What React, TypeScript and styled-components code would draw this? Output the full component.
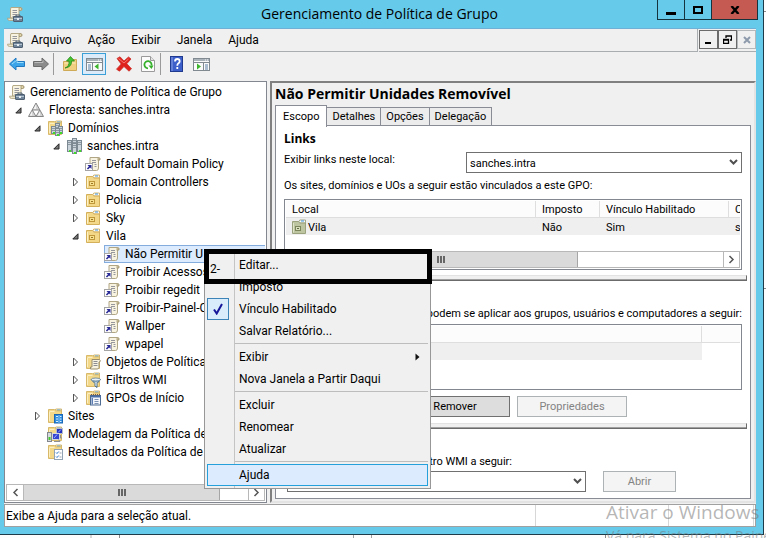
import React from "react";
import styled, { createGlobalStyle, css } from "styled-components";

const UI = '"Open Sans", "Noto Sans", sans-serif';
const LABEL = 'Roboto, "Open Sans", sans-serif';
const CLASSIC = 'Roboto, "Liberation Sans", Arial, sans-serif';

const GlobalStyle = createGlobalStyle`
  *, *::before, *::after { box-sizing: border-box; }
  body { margin: 0; background: #fdfdfd; font: 12px/18px ${LABEL}; color: #000; }
  button, select { font: inherit; color: inherit; border-radius: 0; margin: 0; }
  ul { list-style: none; margin: 0; padding: 0; }
  h1, h2, p { margin: 0; font: inherit; }
  svg { display: block; flex: none; }
`;

/* ---------- window frame ---------- */

const Desktop = styled.div`
  position: relative;
  min-height: 100vh;
  overflow: hidden;
  padding: 0 2px 3px 0;
  display: flex;
  background:
    linear-gradient(#8a8a8a, #8a8a8a) 119px 100% / 1px 3px no-repeat,
    linear-gradient(#d8d8d8, #d8d8d8) 90px 100% / 2px 3px no-repeat,
    linear-gradient(#a0a0a0, #a0a0a0) 353px 100% / 1px 3px no-repeat,
    linear-gradient(#a0a0a0, #a0a0a0) 371px 100% / 1px 3px no-repeat,
    linear-gradient(#8a8a8a, #8a8a8a) 605px 100% / 1px 3px no-repeat,
    linear-gradient(#8a8a8a, #8a8a8a) 100% 11px / 2px 1px no-repeat,
    linear-gradient(#8a8a8a, #8a8a8a) 100% 288px / 2px 1px no-repeat,
    #fdfdfd;
`;

const Window = styled.div`
  flex: 1;
  min-width: 0;
  display: flex;
  flex-direction: column;
  background: #66caea;
  border: solid #1d3b48;
  border-width: 0 1px 1px 0;
  padding: 0 7px 7px 4px;
`;

const TitleBar = styled.header`
  height: 28px;
  display: grid;
  grid-template-columns: 95px 1fr 101px;
  align-items: center;
  padding-left: 3px;
  margin-right: -2px;
`;

const Title = styled.h1`
  font-family: ${UI};
  font-size: 14px;
  text-align: center;
`;

const CaptionButtons = styled.div`
  display: flex;
  align-self: start;
  border: solid #14333f;
  border-width: 0 1px 1px 1px;
  height: 20px;
`;

const CaptionButton = styled.button<{ $close?: boolean }>`
  display: grid;
  place-items: center;
  flex: ${(p) => (p.$close ? "46" : "27")};
  padding: 0;
  border: 0;
  background: ${(p) => (p.$close ? "#c45a52" : "transparent")};
  & + & { border-left: 1px solid #14333f; }
`;

const Client = styled.div`
  flex: 1;
  display: flex;
  flex-direction: column;
  background: #f0f0f0;
  border-top: 1px solid #6fb0d6;
`;

const MenuBar = styled.nav`
  height: 24px;
  display: flex;
  align-items: stretch;
`;

const MenuBarItems = styled.div`
  flex: 1;
  display: flex;
  align-items: center;
  padding: 0 3px;
  border: solid #a9adb0;
  border-width: 0 1px 1px 0;
  margin-bottom: 1px;
`;

const MenuBarButton = styled.button`
  border: 0;
  background: none;
  padding: 0 8px;
`;

const MdiButtons = styled.div`
  display: flex;
  padding: 1px 0 0;
  margin: 0 0 1px 1px;
  border-bottom: 1px solid #a9adb0;
`;

const MdiButton = styled.button`
  width: 19px;
  height: 19px;
  padding: 0;
  display: grid;
  place-items: center;
  background: #f0f0f0;
  border: 1px solid #6b6b6b;
  &:disabled { border-color: #b4b8ba; }
`;

const ToolBar = styled.div`
  height: 28px;
  display: flex;
  align-items: flex-start;
  padding-left: 1px;
`;

const ToolButton = styled.button<{ $pressed?: boolean }>`
  width: 24px;
  height: 22px;
  padding: 0;
  display: grid;
  place-items: center;
  border: 1px solid ${(p) => (p.$pressed ? "#3a9fd6" : "transparent")};
  background: ${(p) => (p.$pressed ? "#dcebfa" : "none")};
  ${(p) => p.$pressed && "margin-right: 6px;"}
`;

const ToolSeparator = styled.span`
  width: 1px;
  height: 22px;
  background: #9a9a9a;
  margin: 0 4px 0 0;
`;

const Main = styled.main`
  flex: 1;
  display: flex;
  gap: 3px;
  margin-bottom: 1px;
`;

/* ---------- tree pane ---------- */

const TreePane = styled.section`
  width: 263px;
  flex: none;
  display: flex;
  flex-direction: column;
  background: #fff;
  border: 1px solid #828790;
  padding: 1px;
`;

const TreeRoot = styled.ul`
  flex: 1;
  padding-left: 3px;
`;

const TreeGroup = styled.ul<{ $root?: boolean }>`
  padding-left: ${(p) => (p.$root ? 0 : 19)}px;
`;

const TreeRow = styled.div`
  display: flex;
  align-items: center;
  height: 18px;
`;

const Twisty = styled.span`
  width: 19px;
  flex: none;
  padding-left: 6px;
`;

const TreeLabel = styled.span<{ $selected?: boolean }>`
  flex: 1;
  min-width: 0;
  display: flex;
  align-items: center;
  gap: 5px;
  height: 18px;
  overflow: hidden;
  white-space: nowrap;
  ${(p) =>
    p.$selected &&
    css`
      background: #dcebfd;
      box-shadow: inset 0 1px #84acdd, inset 0 -1px #84acdd, inset 1px 0 #84acdd;
    `}
`;

/* ---------- scroll bars ---------- */

const ScrollTrack = styled.div`
  height: 17px;
  display: grid;
  border: 1px solid #b8b8b8;
  background: #fff;
`;
const TreeTrack = styled(ScrollTrack)`
  grid-template-columns: 17px 196px 1fr 16px;
`;
const ListTrack = styled(ScrollTrack)`
  grid-template-columns: 17px 274px 1fr 16px;
`;

const ScrollButton = styled.button<{ $end?: boolean }>`
  display: grid;
  place-items: center;
  padding: 0;
  border: solid #b8b8b8;
  border-width: ${(p) => (p.$end ? "0 0 0 1px" : "0 1px 0 0")};
  background: #fff;
`;

const Thumb = styled.div`
  display: grid;
  place-items: center;
  background: #dadada;
  border-right: 1px solid #a6a6a6;
`;

/* ---------- details pane ---------- */

const DetailPane = styled.section`
  flex: 1;
  min-width: 0;
  display: flex;
  flex-direction: column;
  font: 11px/15px ${CLASSIC};
  border: 2px solid;
  border-color: #808080 #e3e3e3 #e3e3e3 #808080;
  padding: 0 3px 2px 3px;
`;

const PaneTitle = styled.h2`
  font-family: ${UI};
  font-size: 14px;
  font-weight: bold;
  line-height: 22px;
  height: 22px;
`;

const Tabs = styled.div`
  display: flex;
  align-items: flex-end;
  height: 20px;
`;

const Tab = styled.button<{ $active?: boolean }>`
  height: ${(p) => (p.$active ? 22 : 18)}px;
  padding: 0 ${(p) => (p.$active ? 7 : 5)}px;
  border: 1px solid #898c95;
  border-bottom: 0;
  background: ${(p) => (p.$active ? "#fff" : "#ececec")};
  ${(p) => p.$active && "position: relative; margin-bottom: -2px;"}
  & + & { margin-left: -1px; }
  &:nth-child(2) { margin-left: 0; border-left: 0; }
`;

const TabPage = styled.div`
  flex: 1;
  background: #fff;
  border: 1px solid #898c95;
  padding: 5px 8px 6px;
`;

const SectionTitle = styled.h2`
  font-family: ${UI};
  font-size: 12px;
  font-weight: bold;
  line-height: 16px;
`;

const LocationRow = styled.div`
  display: grid;
  grid-template-columns: 182px 1fr;
  align-items: start;
  margin-top: 5px;
`;

const SelectBox = styled.div`
  position: relative;
  select {
    display: block;
    appearance: none;
    width: 100%;
    height: 21px;
    padding: 2px 3px 0;
    background: #fff;
    border: 1px solid #707070;
  }
  svg { position: absolute; right: 4px; top: 7px; pointer-events: none; }
`;

const Caption = styled.p`
  line-height: 15px;
  white-space: nowrap;
`;
const LinksCaption = styled(Caption)`
  margin: 5px 0 6px;
`;
const FilterCaption = styled(Caption)`
  margin: 25px 0 3px;
  display: flex;
  justify-content: flex-end;
`;
const WmiCaption = styled(Caption)`
  margin: 25px 0 2px;
  width: 228px;
  display: flex;
  justify-content: flex-end;
`;

const ListFrame = styled.div<{ $height: number }>`
  height: ${(p) => p.$height}px;
  display: flex;
  flex-direction: column;
  justify-content: space-between;
  border: 1px solid #828790;
  padding: 1px;
  overflow: hidden;
`;

const Table = styled.table`
  width: 100%;
  table-layout: fixed;
  border-collapse: separate;
  border-spacing: 0;
  line-height: 15px;
  th, td {
    height: 17px;
    padding: 1px 0 0 6px;
    text-align: left;
    font-weight: normal;
    white-space: nowrap;
    overflow: hidden;
  }
  th {
    background: #fcfcfc;
    border: solid #dedede;
    border-width: 0 1px 1px 0;
  }
  td { background: #efefef; }
  td + td:last-child:empty { background: #fff; }
  th:last-child { border-right: 0; }
`;

const CellWithIcon = styled.span`
  display: flex;
  align-items: center;
  gap: 1px;
  height: 16px;
  margin-left: -1px;
`;

const Divider = styled.hr`
  height: 6px;
  margin: 5px -5px 0 0;
  border: solid #6b6b6b;
  border-width: 1px 1px 1px 0;
  border-top-color: #e3e3e3;
  background: linear-gradient(#f0f0f0 3px, #a0a0a0 3px);
`;

const ButtonRow = styled.div`
  display: grid;
  grid-template-columns: 109px 110px 110px;
  column-gap: 7px;
  margin: 6px 0;
`;

const PushButton = styled.button<{ $column?: number }>`
  height: 21px;
  padding: 0;
  ${(p) => p.$column && `grid-column: ${p.$column};`}
  background: #dddddd;
  border: 1px solid #707070;
  &:disabled {
    color: #838383;
    background: #f4f4f4;
    border-color: #adb2b5;
  }
`;

const WmiRow = styled.div`
  display: grid;
  grid-template-columns: 299px 73px;
  gap: 17px;
  padding-left: 3px;
`;

/* ---------- status bar ---------- */

const StatusBar = styled.footer`
  height: 23px;
  display: grid;
  grid-template-columns: 1fr 133px 85px 2px;
  background: #fff;
  border: solid #a0a0a0;
  border-width: 1px 0 1px 1px;
  line-height: 23px;
  span { height: 21px; padding-left: 1px; border-right: 1px solid #d7d7d7; }
  span:last-child { border-right-color: #a0a0a0; }
`;

/* ---------- overlays ---------- */

const ContextMenu = styled.div`
  position: absolute;
  left: 204px;
  top: 251px;
  width: 227px;
  padding: 2px;
  background: linear-gradient(90deg, transparent 29px, #c4c4c4 29px, #c4c4c4 30px, transparent 30px) #f0f0f0;
  border: 1px solid #979797;
`;

const MenuItem = styled.button<{ $hot?: boolean }>`
  width: 100%;
  height: 22px;
  padding: 0 8px 0 0;
  display: grid;
  grid-template-columns: 22px 1fr auto;
  column-gap: 10px;
  align-items: center;
  text-align: left;
  background: ${(p) => (p.$hot ? "#dcebfd" : "none")};
  border: 0;
  box-shadow: ${(p) => (p.$hot ? "inset 0 0 0 1px #26a0da" : "none")};
`;

const MenuCheck = styled.span<{ $on?: boolean }>`
  width: 22px;
  height: 22px;
  display: grid;
  place-items: center;
  ${(p) => p.$on && "background: #d8ecfb; border: 1px solid #3c84b8;"}
`;

const MenuSeparator = styled.hr`
  height: 1px;
  margin: 1px 0 2px 28px;
  border: 0;
  background: #bdbdbd;
`;

const StepMarker = styled.div`
  position: absolute;
  left: 204px;
  top: 249px;
  width: 228px;
  height: 35px;
  border: 5px solid #000;
  padding: 6px 1px;
  pointer-events: none;
`;

const Watermark = styled.div`
  position: absolute;
  left: 606px;
  top: 499px;
  color: rgba(120, 120, 120, 0.55);
  font-family: ${UI};
  white-space: nowrap;
  pointer-events: none;
  p:first-child { font-size: 19px; line-height: 27px; }
  p:last-child { font-size: 14px; line-height: 20px; }
`;

/* ---------- icons ---------- */

const ScrollPaper = () => (
  <>
    <path d="M4 1.500h9.500q1.600 0 1.600 1.600t-1.600 1.400H12V12H3.500V3z" fill="#f8f3e0" stroke="#b5aa88" />
    <path d="M12 4.500V2.600q0-1.100 1.100-1.100t1.500 1.200-1 1.800z" fill="#e2d6ac" stroke="#9b8f69" strokeWidth=".8" />
    <path d="M5.500 4.500h4.500M5.500 6.500h4.500M5.500 8.500h4M5.500 10.500h3" stroke="#95979c" />
  </>
);

const ConsoleIcon = () => (
  <svg width="16" height="16" viewBox="0 0 16 16">
    <ScrollPaper />
    <path d="M.500 12.200h8v2.300H2.500Q.500 14.500.500 12.200z" fill="#efe7cb" stroke="#aa9f7c" strokeWidth=".8" />
    <rect x="6.500" y="10.500" width="9" height="5" rx=".5" fill="#71859a" stroke="#4d5f70" />
    <path d="M9 10.500V9h4v1.500" fill="none" stroke="#4d5f70" />
    <path d="M7 12.500h8" stroke="#b3c3cf" />
    <rect x="10" y="12" width="2" height="2" fill="#e9eef2" />
  </svg>
);

const GpoLinkIcon = () => (
  <svg width="16" height="16" viewBox="0 0 16 16">
    <path d="M5 1.500h8.500q1.700.2 1.500 1.700t-1.500 1.300V12q0 2.500-2 2.500H5z" fill="#f8f3e0" stroke="#b0a684" />
    <path d="M13 4.500V2.600q.2-1.100 1.100-.8t.8 1.500z" fill="#e2d6ac" stroke="#9b8f69" strokeWidth=".8" />
    <path d="M7 4.500h4M7 6.500h4M9.500 8.500h2M9.500 10.500h2" stroke="#95979c" />
    <rect x=".500" y="7.500" width="7" height="7" fill="#fff" stroke="#a4a4a4" />
    <path d="M2.500 9H6.500V13L5.100 11.600 3 13.600 1.900 12.500 3.900 10.400z" fill="#2a2a96" />
  </svg>
);

const FolderShape = () => (
  <>
    <path d="M8 2.500l.8-1.500h5.700v3" fill="#fdf5d8" stroke="#c9a64f" strokeWidth=".8" />
    <rect x="10" y="1.500" width="3.500" height="1.500" fill="#5aa5e8" />
    <path d="M1.500 1.500h6l1.200 1.300h5.800v11.700h-13z" fill="#f3d88a" stroke="#d8b96a" />
    <path d="M2.500 3.500h5M2.500 13V4" stroke="#fbeec0" />
  </>
);

const OuIcon = ({ green }: { green?: boolean }) => (
  <svg width="16" height="16" viewBox="0 0 16 16">
    <path d="M1.500 2.500h6l1.200 1.300h5.800v10.700h-13z" fill={green ? "#bdc4a0" : "#f3d88a"} stroke={green ? "#99a27c" : "#d4b05a"} />
    <path d="M8 2.500l.8-1.500h5.700v2.800H8.800z" fill="#fff" stroke={green ? "#8f9870" : "#c9a64f"} strokeWidth=".8" />
    <path d="M10 2h3" stroke="#3f93e0" />
    <path d="M2.500 4v9.500" stroke={green ? "#dfe4c8" : "#fcf0c6"} />
    <rect x="4.500" y="7.500" width="5" height="4" fill={green ? "#d8deba" : "#f7e08e"} stroke={green ? "#7a855c" : "#c0973a"} />
    <path d="M6 9.500h2" stroke={green ? "#5f6b45" : "#9a7422"} fill="none" />
  </svg>
);

const ForestIcon = () => (
  <svg width="16" height="16" viewBox="0 0 16 16">
    <path d="M8 1L15.500 14.500H.500z" fill="#d4d4d4" stroke="#868686" />
    <path d="M4.300 8h7.400L8 14.500z" fill="#fff" stroke="#868686" />
    <path d="M8 2.500L5.500 7H8zM4 9.500L1.800 13.600H4zM12 9.500L9.800 13.600H12z" fill="#f4f4f4" />
  </svg>
);

const Tower = ({ x, y, h }: { x: number; y: number; h: number }) => (
  <>
    <rect x={x + 0.5} y={y + 0.5} width="4" height={h} fill="#cbd4da" stroke="#7c8992" />
    <path d={`M${x + 1} ${y + 2.5}h3M${x + 1} ${y + 4.5}h3`} stroke="#8b98a1" />
    <rect x={x + 2} y={y + h - 1} width="2" height="2" fill="#3fdc2a" />
  </>
);

const DomainIcon = () => (
  <svg width="16" height="16" viewBox="0 0 16 16">
    <Tower x={6} y={0} h={9} />
    <Tower x={1} y={2} h={11} />
    <Tower x={11} y={2} h={11} />
    <Tower x={6} y={5} h={10} />
  </svg>
);

const DomainsIcon = () => (
  <svg width="16" height="16" viewBox="0 0 16 16">
    <FolderShape />
    <Tower x={8} y={3} h={6} />
    <Tower x={4} y={6} h={7} />
    <Tower x={11} y={6} h={7} />
    <Tower x={8} y={8} h={7} />
  </svg>
);

const ObjectsIcon = () => (
  <svg width="16" height="16" viewBox="0 0 16 16">
    <FolderShape />
    <path d="M7 5.500h7.500q1.300.8.300 2.500H14v5.500q-.5 1.500-1.800 1.500H5.500v-2H7z" fill="#f8f3e0" stroke="#988d6c" />
    <path d="M8.500 7.500h4M8.500 9.500h4M8.500 11.500h4" stroke="#8b8d92" />
  </svg>
);

const WmiIcon = () => (
  <svg width="16" height="16" viewBox="0 0 16 16">
    <FolderShape />
    <path d="M6 7.500h9.500L12 11.500v4L10 14v-2.500z" fill="#8fb1c9" stroke="#4b6c85" />
    <ellipse cx="10.800" cy="7.500" rx="4.600" ry="1.500" fill="#e7f0f6" stroke="#5b7b92" strokeWidth=".8" />
    <path d="M11 10v4" stroke="#dfeaf2" />
  </svg>
);

const StarterIcon = () => (
  <svg width="16" height="16" viewBox="0 0 16 16">
    <FolderShape />
    <rect x="5.500" y="5.500" width="10" height="9.500" fill="#f4f7fb" stroke="#4d6a91" />
    <path d="M6 6h10v1.500H6z" fill="#4a6fa8" />
    <path d="M6 4.500h10" stroke="#7d5a45" strokeDasharray="1 1" />
    <path d="M9.500 9.500h4M9.500 11.500h4M9.500 13.500h4" stroke="#7d93b5" />
    <path d="M6.500 8h1.500V14.500H6.500z" fill="#5b7db3" />
  </svg>
);

const SitesIcon = () => (
  <svg width="16" height="16" viewBox="0 0 16 16">
    <FolderShape />
    <rect x="7.500" y="6.500" width="8" height="8.500" fill="#2f8ee0" stroke="#1b66b5" />
    <path d="M9 8.500h2M13 8.500h1.500M9 11h2M13 11h1.500M9 13.500h2M13 13.500h1.500" stroke="#d9efff" />
    <path d="M12 7v8" stroke="#7ec0f5" />
  </svg>
);

const ModelIcon = () => (
  <svg width="16" height="16" viewBox="0 0 16 16">
    <FolderShape />
    <rect x="9.500" y="2.500" width="6" height="5" fill="#2330c0" stroke="#b8bcc4" />
    <rect x="5.500" y="7.500" width="7" height="6" fill="#3644d2" stroke="#d4d7dc" />
    <path d="M7 12l3-3.500M11 6.500l3-3" stroke="#9fb0ff" />
    <rect x=".500" y="6.500" width="4" height="9" fill="#d8dbe0" stroke="#83888f" />
    <rect x="1.500" y="11" width="2" height="3" fill="#43c92d" />
    <path d="M7 15.500h6l-1.500-2" fill="none" stroke="#8c9096" />
    <path d="M13.500 9v3h1.500" fill="none" stroke="#8c9096" />
  </svg>
);

const ResultsIcon = () => (
  <svg width="16" height="16" viewBox="0 0 16 16">
    <FolderShape />
    <rect x="7.500" y="5.500" width="8" height="10" fill="#fff" stroke="#93a3b4" />
    <path d="M9 8.500l1 1 1.800-2M9 12.500l1 1 1.800-2" fill="none" stroke="#2b77c4" />
    <path d="M12.500 9h2M12.500 13h2" stroke="#9aa4ae" />
  </svg>
);

const Expanded = () => (
  <svg width="7" height="7" viewBox="0 0 7 7">
    <path d="M6 .800V6H.800z" fill="#777" stroke="#262626" />
  </svg>
);
const Collapsed = () => (
  <svg width="7" height="10" viewBox="0 0 7 10">
    <path d="M1.500 1L5.500 5l-4 4z" fill="#fff" stroke="#555" />
  </svg>
);

const ArrowIcon = ({ forward }: { forward?: boolean }) => (
  <svg width="18" height="16" viewBox="0 0 18 16">
    <path
      d={forward ? "M16.500 8L10 2v3.500H1.500v5H10V14z" : "M1.500 8L8 2v3.500h8.500v5H8V14z"}
      fill={forward ? "#8c8c8c" : "#3ba3e8"}
      stroke={forward ? "#6b6b6b" : "#1f78c0"}
    />
    <path d={forward ? "M2.500 6.500h8.500V4.500" : "M15.500 6.500H9V4L4 8"} fill="none" stroke={forward ? "#bcbcbc" : "#9adcf9"} />
  </svg>
);

const UpFolderIcon = () => (
  <svg width="16" height="16" viewBox="0 0 16 16">
    <path d="M1.500 5.500h7l1-2h5v11h-13z" fill="#f0cf80" stroke="#cfab58" />
    <path d="M2.500 7h11" stroke="#fbebbb" />
    <path d="M3 12Q7.500 10.500 7 5H4.500L8.500.500 12.500 5H9.500Q10 11 3 12z" fill="#45c332" stroke="#288a1b" strokeWidth=".8" />
  </svg>
);

const PaneIcon = ({ play }: { play?: boolean }) => (
  <svg width="17" height="16" viewBox="0 0 17 16">
    <rect x=".500" y="2.500" width="16" height="12" fill="#fafafa" stroke="#808890" />
    <path d="M1 3h15v2H1z" fill="#aab2ba" />
    <path d="M1 6.500h15" stroke="#808890" />
    <path d="M12 4h1M14 4h1" stroke="#fff" />
    {play ? (
      <>
        <path d="M10.500 7v7" stroke="#808890" />
        <path d="M12 9h3M12 11h3M12 13h3" stroke="#5b7fa6" />
        <path d="M4 7.500v6l4-3z" fill="#3cb42c" />
      </>
    ) : (
      <>
        <path d="M6.500 7v7" stroke="#808890" />
        <path d="M2 9h3M2 11h3M2 13h3" stroke="#5b7fa6" />
        <path d="M12.500 7.500v6l-4-3z" fill="#3cb42c" />
      </>
    )}
  </svg>
);

const DeleteIcon = () => (
  <svg width="18" height="16" viewBox="0 0 18 16">
    <path
      d="M2 2.500L5 .800 9 5 13.500 1 16 3 11.800 7.700 16.500 12.800 14 15.200 9 10.500 4.500 15.200 1.500 13.200 6.200 8z"
      fill="#e0221c"
      stroke="#c9302b"
      strokeWidth=".8"
    />
    <path d="M3.500 2.500L9 7l4.500-4" fill="none" stroke="#f47b73" />
  </svg>
);

const RefreshIcon = () => (
  <svg width="16" height="16" viewBox="0 0 16 16">
    <path d="M1.500.500h9l4 4v11h-13z" fill="#fcfcfc" stroke="#9a9a9a" />
    <path d="M10.500.500v4h4" fill="#e5e5e5" stroke="#9a9a9a" />
    <path d="M11.500 9.500A3.600 3.600 0 1 0 8 12.300" fill="none" stroke="#35b02a" strokeWidth="1.800" />
    <path d="M8.500 9.500h5L11.500 13z" fill="#35b02a" />
  </svg>
);

const HelpIcon = () => (
  <svg width="14" height="16" viewBox="0 0 14 16">
    <rect x=".500" y=".500" width="12" height="15" fill="#3c5fc9" stroke="#203a8f" />
    <path d="M2 1v14" stroke="#8ba3e6" />
    <path d="M5 5.500Q5 3 7.300 3t2.400 2.200Q9.700 6.500 8.200 7.400 7.300 8 7.300 9.700M7.300 11v2" fill="none" stroke="#fff" strokeWidth="1.800" />
  </svg>
);

const Chevron = () => (
  <svg width="9" height="7" viewBox="0 0 9 7">
    <path d="M1 1l3.500 3.500L8 1" fill="none" stroke="#505050" strokeWidth="2" />
  </svg>
);
const SideChevron = ({ right }: { right?: boolean }) => (
  <svg width="7" height="9" viewBox="0 0 7 9">
    <path d={right ? "M1.500 1L5 4.500 1.500 8" : "M5.500 1L2 4.500 5.500 8"} fill="none" stroke="#555" strokeWidth="1.500" />
  </svg>
);
const Grip = () => (
  <svg width="8" height="7" viewBox="0 0 8 7">
    <path d="M1 0v7M4 0v7M7 0v7" stroke="#666" strokeWidth="2" />
  </svg>
);

/* ---------- data ---------- */

type Node = {
  label: string;
  icon: React.ReactNode;
  open?: boolean;
  closed?: boolean;
  selected?: boolean;
  children?: Node[];
};

const gpo = (label: string, selected = false): Node => ({ label, icon: <GpoLinkIcon />, selected });
const ou = (label: string): Node => ({ label, icon: <OuIcon />, closed: true });

const forest: Node[] = [
  {
    label: "Floresta: sanches.intra",
    icon: <ForestIcon />,
    open: true,
    children: [
      {
        label: "Domínios",
        icon: <DomainsIcon />,
        open: true,
        children: [
          {
            label: "sanches.intra",
            icon: <DomainIcon />,
            open: true,
            children: [
              gpo("Default Domain Policy"),
              ou("Domain Controllers"),
              ou("Policia"),
              ou("Sky"),
              {
                label: "Vila",
                icon: <OuIcon />,
                open: true,
                children: [
                  gpo("Não Permitir U", true),
                  gpo("Proibir Acessos"),
                  gpo("Proibir regedit"),
                  gpo("Proibir-Painel-Controle"),
                  gpo("Wallper"),
                  gpo("wpapel"),
                ],
              },
              { label: "Objetos de Política de Grupo", icon: <ObjectsIcon />, closed: true },
              { label: "Filtros WMI", icon: <WmiIcon />, closed: true },
              { label: "GPOs de Início", icon: <StarterIcon />, closed: true },
            ],
          },
        ],
      },
      { label: "Sites", icon: <SitesIcon />, closed: true },
      { label: "Modelagem da Política de Grupo", icon: <ModelIcon /> },
      { label: "Resultados da Política de Grupo", icon: <ResultsIcon /> },
    ],
  },
];

const Tree = ({ nodes, root }: { nodes: Node[]; root?: boolean }) => (
  <TreeGroup role="group" $root={root}>
    {nodes.map((n) => (
      <li key={n.label} role="treeitem" aria-selected={!!n.selected}>
        <TreeRow>
          <Twisty>{n.open ? <Expanded /> : n.closed ? <Collapsed /> : null}</Twisty>
          <TreeLabel $selected={n.selected}>
            {n.icon}
            {n.label}
          </TreeLabel>
        </TreeRow>
        {n.children && <Tree nodes={n.children} />}
      </li>
    ))}
  </TreeGroup>
);

type Entry = { label: string; checked?: boolean; submenu?: boolean; hot?: boolean };
const menuGroups: Entry[][] = [
  [{ label: "Editar..." }, { label: "Imposto" }, { label: "Vínculo Habilitado", checked: true }, { label: "Salvar Relatório..." }],
  [{ label: "Exibir", submenu: true }, { label: "Nova Janela a Partir Daqui" }],
  [{ label: "Excluir" }, { label: "Renomear" }, { label: "Atualizar" }],
  [{ label: "Ajuda", hot: true }],
];

/* ---------- page ---------- */

export default function App() {
  return (
    <Desktop>
      <GlobalStyle />
      <Window>
        <TitleBar>
          <ConsoleIcon />
          <Title>Gerenciamento de Política de Grupo</Title>
          <CaptionButtons>
            <CaptionButton aria-label="Minimizar">
              <svg width="10" height="10" viewBox="0 0 10 10"><path d="M0 8.500h10" stroke="#000" strokeWidth="3" /></svg>
            </CaptionButton>
            <CaptionButton aria-label="Maximizar">
              <svg width="10" height="8" viewBox="0 0 10 8"><path d="M1 1h8v6H1z" fill="none" stroke="#000" strokeWidth="2" /></svg>
            </CaptionButton>
            <CaptionButton aria-label="Fechar" $close>
              <svg width="10" height="8" viewBox="0 0 10 8"><path d="M1.500 0l7 8M8.500 0l-7 8" stroke="#000" strokeWidth="2.400" /></svg>
            </CaptionButton>
          </CaptionButtons>
        </TitleBar>

        <Client>
          <MenuBar>
            <MenuBarItems>
              <ConsoleIcon />
              {["Arquivo", "Ação", "Exibir", "Janela", "Ajuda"].map((m) => (
                <MenuBarButton key={m}>{m}</MenuBarButton>
              ))}
            </MenuBarItems>
            <MdiButtons>
              <MdiButton aria-label="Minimizar janela">
                <svg width="9" height="9" viewBox="0 0 9 9"><path d="M1 8h6" stroke="#000" strokeWidth="2" /></svg>
              </MdiButton>
              <MdiButton aria-label="Restaurar janela">
                <svg width="9" height="9" viewBox="0 0 9 9"><path d="M3 3V1h5.500v4H7M.500 4.500h5v4h-5zM.500 5h5M3 1h5.500" fill="none" stroke="#000" strokeWidth="1.300" /></svg>
              </MdiButton>
              <MdiButton aria-label="Fechar janela" disabled>
                <svg width="8" height="8" viewBox="0 0 8 8"><path d="M1 1l6 6M7 1L1 7" stroke="#8d9aac" strokeWidth="2" /></svg>
              </MdiButton>
            </MdiButtons>
          </MenuBar>

          <ToolBar>
            <ToolButton aria-label="Voltar"><ArrowIcon /></ToolButton>
            <ToolButton aria-label="Avançar"><ArrowIcon forward /></ToolButton>
            <ToolSeparator />
            <ToolButton aria-label="Um nível acima"><UpFolderIcon /></ToolButton>
            <ToolButton aria-label="Mostrar árvore de console" $pressed><PaneIcon /></ToolButton>
            <ToolButton aria-label="Excluir"><DeleteIcon /></ToolButton>
            <ToolButton aria-label="Atualizar"><RefreshIcon /></ToolButton>
            <ToolSeparator />
            <ToolButton aria-label="Ajuda"><HelpIcon /></ToolButton>
            <ToolButton aria-label="Mostrar painel de ações"><PaneIcon play /></ToolButton>
          </ToolBar>

          <Main>
            <TreePane>
              <TreeRoot role="tree">
                <li role="treeitem" aria-expanded="true">
                  <TreeRow>
                    <TreeLabel>
                      <ConsoleIcon />
                      Gerenciamento de Política de Grupo
                    </TreeLabel>
                  </TreeRow>
                  <Tree nodes={forest} root />
                </li>
              </TreeRoot>
              <TreeTrack>
                <ScrollButton aria-label="Rolar para a esquerda"><SideChevron /></ScrollButton>
                <Thumb><Grip /></Thumb>
                <span />
                <ScrollButton aria-label="Rolar para a direita" $end><SideChevron right /></ScrollButton>
              </TreeTrack>
            </TreePane>

            <DetailPane>
              <PaneTitle>Não Permitir Unidades Removível</PaneTitle>
              <Tabs role="tablist">
                <Tab role="tab" aria-selected="true" $active>Escopo</Tab>
                <Tab role="tab">Detalhes</Tab>
                <Tab role="tab">Opções</Tab>
                <Tab role="tab">Delegação</Tab>
              </Tabs>
              <TabPage role="tabpanel">
                <SectionTitle>Links</SectionTitle>
                <LocationRow>
                  <label htmlFor="location">Exibir links neste local:</label>
                  <SelectBox>
                    <select id="location"><option>sanches.intra</option></select>
                    <Chevron />
                  </SelectBox>
                </LocationRow>
                <LinksCaption>Os sites, domínios e UOs a seguir estão vinculados a este GPO:</LinksCaption>
                <ListFrame $height={71}>
                  <Table>
                    <colgroup>
                      <col />
                      <col width="64" />
                      <col width="129" />
                      <col width="11" />
                    </colgroup>
                    <thead>
                      <tr><th>Local</th><th>Imposto</th><th>Vínculo Habilitado</th><th>C</th></tr>
                    </thead>
                    <tbody>
                      <tr>
                        <td><CellWithIcon><OuIcon green />Vila</CellWithIcon></td>
                        <td>Não</td>
                        <td>Sim</td>
                        <td>s</td>
                      </tr>
                    </tbody>
                  </Table>
                  <ListTrack>
                    <ScrollButton aria-label="Rolar para a esquerda"><SideChevron /></ScrollButton>
                    <Thumb><Grip /></Thumb>
                    <span />
                    <ScrollButton aria-label="Rolar para a direita" $end><SideChevron right /></ScrollButton>
                  </ListTrack>
                </ListFrame>
                <Divider />

                <FilterCaption>
                  As configurações neste GPO só podem se aplicar aos grupos, usuários e computadores a seguir:
                </FilterCaption>
                <ListFrame $height={66}>
                  <Table>
                    <colgroup>
                      <col />
                      <col width="38" />
                    </colgroup>
                    <thead><tr><th /><th /></tr></thead>
                    <tbody><tr><td /><td /></tr></tbody>
                  </Table>
                </ListFrame>
                <ButtonRow>
                  <PushButton $column={2}>Remover</PushButton>
                  <PushButton disabled>Propriedades</PushButton>
                </ButtonRow>
                <Divider />

                <WmiCaption>
                  <label htmlFor="wmi">Este GPO está vinculado ao filtro WMI a seguir:</label>
                </WmiCaption>
                <WmiRow>
                  <SelectBox>
                    <select id="wmi"><option> </option></select>
                    <Chevron />
                  </SelectBox>
                  <PushButton disabled>Abrir</PushButton>
                </WmiRow>
              </TabPage>
            </DetailPane>
          </Main>

          <StatusBar>
            <span>Exibe a Ajuda para a seleção atual.</span>
            <span />
            <span />
            <span />
          </StatusBar>
        </Client>
      </Window>

      <ContextMenu role="menu">
        {menuGroups.map((group, i) => (
          <React.Fragment key={i}>
            {i > 0 && <MenuSeparator />}
            {group.map((m) => (
              <MenuItem key={m.label} role="menuitem" $hot={m.hot}>
                <MenuCheck $on={m.checked}>
                  {m.checked && (
                    <svg width="10" height="12" viewBox="0 0 10 12">
                      <path d="M1 6.500L3.700 10.500 9 1" fill="none" stroke="#16169a" strokeWidth="2" />
                    </svg>
                  )}
                </MenuCheck>
                {m.label}
                {m.submenu && (
                  <svg width="5" height="8" viewBox="0 0 5 8"><path d="M.500.500L4.500 4 .500 7.500z" fill="#111" /></svg>
                )}
              </MenuItem>
            ))}
          </React.Fragment>
        ))}
      </ContextMenu>
      <StepMarker>2-</StepMarker>
      <Watermark>
        <p>Ativar o Windows</p>
        <p>Vá para Sistema no Painel</p>
      </Watermark>
    </Desktop>
  );
}
